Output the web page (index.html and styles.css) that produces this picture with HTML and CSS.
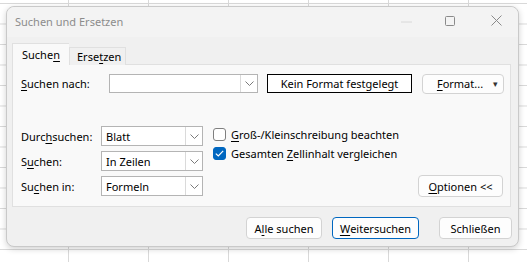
FILE: index.html
```html
<!DOCTYPE html>
<html lang="de">
<head>
<meta charset="utf-8">
<title>Suchen und Ersetzen</title>
<link rel="stylesheet" href="styles.css">
</head>
<body>
<div class="dialog">
  <div class="titlebar">
    <span class="title">Suchen und Ersetzen</span>
    <span class="ctrl min"><svg width="11" height="2" viewBox="0 0 11 2"><path d="M0 1H11" stroke="#d8d8d8" stroke-width="1"/></svg></span>
    <span class="ctrl max"><svg width="10" height="10" viewBox="0 0 10 10"><rect x="0.5" y="0.5" width="9" height="9" rx="1" fill="none" stroke="#8a8a8a" stroke-width="1"/></svg></span>
    <span class="ctrl close"><svg width="11" height="11" viewBox="0 0 11 11"><path d="M0.5 0.5L10.5 10.5M10.5 0.5L0.5 10.5" stroke="#8a8a8a" stroke-width="1"/></svg></span>
  </div>
  <div class="content">
    <div class="tabs">
      <div class="tab active">Suche<u>n</u></div>
      <div class="tab">Erse<u>t</u>zen</div>
    </div>
    <div class="panel">
      <div class="row1">
        <label class="lbl1"><u>S</u>uchen nach:</label>
        <div class="combo wide">
          <span class="val"></span>
          <span class="drop"><svg width="9" height="5" viewBox="0 0 9 5"><path d="M0.5 0.5L4.5 4.5L8.5 0.5" fill="none" stroke="#7a7a7a" stroke-width="1"/></svg></span>
        </div>
        <div class="nofmt">Kein Format festgelegt</div>
        <div class="btn fmt"><span><u>F</u>ormat...</span><span class="caret">▾</span></div>
      </div>
      <div class="lower">
        <div class="selects">
          <div class="srow">
            <label class="lbl2">Durc<u>h</u>suchen:</label>
            <div class="combo sel"><span class="val">Blatt</span><span class="drop"><svg width="9" height="5" viewBox="0 0 9 5"><path d="M0.5 0.5L4.5 4.5L8.5 0.5" fill="none" stroke="#7a7a7a" stroke-width="1"/></svg></span></div>
          </div>
          <div class="srow">
            <label class="lbl2">S<u>u</u>chen:</label>
            <div class="combo sel"><span class="val">In Zeilen</span><span class="drop"><svg width="9" height="5" viewBox="0 0 9 5"><path d="M0.5 0.5L4.5 4.5L8.5 0.5" fill="none" stroke="#7a7a7a" stroke-width="1"/></svg></span></div>
          </div>
          <div class="srow">
            <label class="lbl2">Su<u>c</u>hen in:</label>
            <div class="combo sel"><span class="val">Formeln</span><span class="drop"><svg width="9" height="5" viewBox="0 0 9 5"><path d="M0.5 0.5L4.5 4.5L8.5 0.5" fill="none" stroke="#7a7a7a" stroke-width="1"/></svg></span></div>
          </div>
        </div>
        <div class="checks">
          <div class="chk"><span class="box"></span><span><u>G</u>roß-/Kleinschreibung beachten</span></div>
          <div class="chk"><span class="box on"><svg width="9" height="7" viewBox="0 0 9 7"><path d="M0.8 3.6L3.3 6L8.2 0.9" fill="none" stroke="#fff" stroke-width="1.2"/></svg></span><span>Gesamten <u>Z</u>ellinhalt vergleichen</span></div>
        </div>
        <div class="btn opt"><u>O</u>ptionen &lt;&lt;</div>
      </div>
    </div>
    <div class="actions">
      <div class="btn act alle">A<u>l</u>le suchen</div>
      <div class="btn act weiter"><u>W</u>eitersuchen</div>
      <div class="btn act schl">Schließen</div>
    </div>
  </div>
</div>
</body>
</html>
```
FILE: styles.css
```css
html, body {
  margin: 0;
  padding: 0;
}
body {
  width: 527px;
  height: 262px;
  overflow: hidden;
  background-color: #ffffff;
  background-image:
    linear-gradient(to right, #d9d9d9 1px, transparent 1px),
    linear-gradient(to bottom, #d9d9d9 1px, transparent 1px);
  background-size: 80px 20.5px;
  background-position: 68px 3px;
  font-family: "Noto Sans", "Open Sans", sans-serif;
  font-size: 11px;
  color: #000;
}
u { text-decoration: underline; text-underline-offset: 2px; text-decoration-thickness: 1px; }

.dialog {
  margin: 6px 0 0 6px;
  width: 511px;
  height: 239px;
  border: 1px solid #c9c9c9;
  border-radius: 8px;
  background: #f0f0f0;
  box-shadow: 0 2px 6px rgba(0,0,0,0.18);
  display: flex;
  flex-direction: column;
}
.titlebar {
  height: 30px;
  display: flex;
  align-items: center;
  padding-left: 8px;
  background: #f3f3f3;
  border-radius: 8px 8px 0 0;
}
.title {
  color: #8c8c8c;
  font-size: 11px;
  flex: 1;
  margin-top: -1px;
}
.ctrl { display: flex; align-items: center; }
.ctrl.min { margin-right: 33px; }
.ctrl.max { margin-right: 36px; margin-top: -3px; }
.ctrl.close { margin-right: 16px; margin-top: -3px; }

.content {
  padding: 7px 7px 0 5px;
  display: flex;
  flex-direction: column;
}
.tabs {
  display: flex;
  align-items: flex-end;
  height: 21px;
  margin-bottom: -1px;
  position: relative;
  z-index: 1;
}
.tab {
  height: 18px;
  width: 57px;
  box-sizing: border-box;
  border: 1px solid #e0e0e0;
  border-bottom: none;
  background: #f0f0f0;
  padding-left: 8px;
  line-height: 17px;
}
.tab.active {
  height: 22px;
  background: #f9f9f9;
  padding-left: 9px;
  line-height: 22px;
  border-right: none;
}
.tab:not(.active) { padding-left: 7px; }

.panel {
  height: 143px;
  box-sizing: border-box;
  border: 1px solid #e0e0e0;
  background: #f9f9f9;
  padding: 9px 0 0 8px;
  display: flex;
  flex-direction: column;
}
.row1 {
  display: flex;
  align-items: center;
  height: 19px;
}
.lbl1 { width: 88px; }
.combo {
  height: 19px;
  box-sizing: border-box;
  border: 1px solid #b4b4b4;
  background: #fff;
  display: flex;
  align-items: center;
}
.combo .val { flex: 1; padding-left: 4px; }
.combo .drop {
  width: 16px;
  height: 100%;
  border-left: 1px solid #dadada;
  display: flex;
  align-items: center;
  justify-content: center;
}
.combo.wide { width: 149px; }
.nofmt {
  margin-left: 9px;
  width: 145px;
  height: 19px;
  box-sizing: border-box;
  border: 1px solid #000;
  background: #fff;
  display: flex;
  align-items: center;
  justify-content: center;
}
.btn {
  box-sizing: border-box;
  border: 1px solid #d3d3d3;
  border-radius: 4px;
  background: #fdfdfd;
  display: flex;
  align-items: center;
  justify-content: center;
}
.fmt {
  margin-left: 10px;
  width: 82px;
  height: 20px;
  position: relative;
  padding-right: 6px;
}
.fmt .caret {
  position: absolute;
  right: 5px;
  top: 2px;
  font-size: 9px;
  color: #333;
}

.lower {
  display: flex;
  align-items: flex-end;
  margin-top: 33px;
}
.selects { display: flex; flex-direction: column; gap: 5px; }
.srow { display: flex; align-items: center; height: 20px; }
.lbl2 { width: 80px; }
.combo.sel { width: 102px; height: 20px; }
.checks {
  align-self: flex-start;
  margin-left: 10px;
  display: flex;
  flex-direction: column;
  gap: 5px;
  margin-top: 1px;
}
.chk { display: flex; align-items: center; height: 14px; gap: 5px; }
.box {
  width: 13px;
  height: 13px;
  box-sizing: border-box;
  border: 1px solid #7f7f7f;
  border-radius: 3px;
  background: #fff;
  display: flex;
  align-items: center;
  justify-content: center;
}
.box.on { background: #0067c0; border-color: #0067c0; }
.opt {
  margin-left: auto;
  margin-right: 7px;
  width: 85px;
  height: 22px;
  margin-bottom: -1px;
}

.actions {
  display: flex;
  justify-content: flex-end;
  margin-top: 10px;
  margin-right: -1px;
}
.act { height: 22px; }
.alle { width: 76px; }
.weiter { width: 87px; margin-left: 10px; border-color: #0067c0; }
.schl { width: 73px; margin-left: 20px; }
```
